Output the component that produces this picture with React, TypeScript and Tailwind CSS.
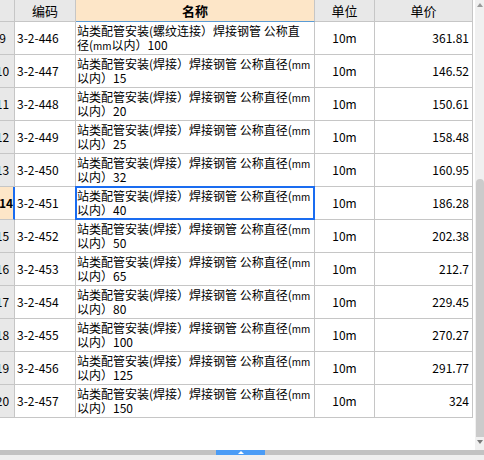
const rows = [
  { n: "9", code: "3-2-446", l1: "站类配管安装(螺纹连接）焊接钢管 公称直", mm: false, l2a: "径(", l2b: "以内）100", price: "361.81" },
  { n: "10", code: "3-2-447", l1: "站类配管安装(焊接）焊接钢管 公称直径(", mm: true, l2a: "", l2b: "以内）15", price: "146.52" },
  { n: "11", code: "3-2-448", l1: "站类配管安装(焊接）焊接钢管 公称直径(", mm: true, l2a: "", l2b: "以内）20", price: "150.61" },
  { n: "12", code: "3-2-449", l1: "站类配管安装(焊接）焊接钢管 公称直径(", mm: true, l2a: "", l2b: "以内）25", price: "158.48" },
  { n: "13", code: "3-2-450", l1: "站类配管安装(焊接）焊接钢管 公称直径(", mm: true, l2a: "", l2b: "以内）32", price: "160.95" },
  { n: "14", code: "3-2-451", l1: "站类配管安装(焊接）焊接钢管 公称直径(", mm: true, l2a: "", l2b: "以内）40", price: "186.28" },
  { n: "15", code: "3-2-452", l1: "站类配管安装(焊接）焊接钢管 公称直径(", mm: true, l2a: "", l2b: "以内）50", price: "202.38" },
  { n: "16", code: "3-2-453", l1: "站类配管安装(焊接）焊接钢管 公称直径(", mm: true, l2a: "", l2b: "以内）65", price: "212.7" },
  { n: "17", code: "3-2-454", l1: "站类配管安装(焊接）焊接钢管 公称直径(", mm: true, l2a: "", l2b: "以内）80", price: "229.45" },
  { n: "18", code: "3-2-455", l1: "站类配管安装(焊接）焊接钢管 公称直径(", mm: true, l2a: "", l2b: "以内）100", price: "270.27" },
  { n: "19", code: "3-2-456", l1: "站类配管安装(焊接）焊接钢管 公称直径(", mm: true, l2a: "", l2b: "以内）125", price: "291.77" },
  { n: "20", code: "3-2-457", l1: "站类配管安装(焊接）焊接钢管 公称直径(", mm: true, l2a: "", l2b: "以内）150", price: "324" },
];

export default function App() {
  return (
    <div className="flex h-[460px] w-[484px] flex-col overflow-hidden bg-white font-['Noto_Sans_CJK_SC',sans-serif] text-[12px] text-black">
      <div className="flex h-[450px]">
        {/* grid */}
        <div className="w-[473px] overflow-hidden bg-white">
          <div className="flex h-[22px] leading-[14px]">
            <div className="w-[15px] border-r border-b border-[#c6c6c6] bg-[#e8e8e8]" />
            <div className="flex w-[61px] items-center justify-center border-r border-b border-[#c6c6c6] bg-[#e8e8e8] text-[13px]">编码</div>
            <div className="flex w-[239px] items-center justify-center border-r border-b border-r-[#c6c6c6] border-b-[#5b9bd5] bg-[#fde6c8] text-[13px] font-bold">名称</div>
            <div className="flex w-[60px] items-center justify-center border-r border-b border-[#c6c6c6] bg-[#e8e8e8] text-[13px]">单位</div>
            <div className="flex w-[98px] items-center justify-center border-r border-b border-[#c6c6c6] bg-[#e8e8e8] text-[13px]">单价</div>
          </div>
          {rows.map((r) => {
            const sel = r.n === "14";
            return (
              <div key={r.n} className="flex h-[33px] leading-[14px]">
                <div
                  className={
                    sel
                      ? "flex w-[15px] items-center overflow-hidden border-r-2 border-b border-r-[#1a6cf0] border-b-[#c6c6c6] bg-[#fde6c8] font-bold"
                      : "flex w-[15px] items-center overflow-hidden border-r border-b border-[#c6c6c6] bg-[#e8e8e8]"
                  }
                >
                  <div className={sel ? "ml-[-2px] w-[16px] shrink-0 text-center whitespace-nowrap" : "ml-[-9px] w-[23px] shrink-0 text-center whitespace-nowrap"}>
                    {r.n}
                  </div>
                </div>
                <div className="flex w-[61px] items-center border-r border-b border-[#c6c6c6] pl-[2px] whitespace-nowrap">
                  {r.code}
                </div>
                <div className="relative flex w-[239px] flex-col justify-center border-r border-b border-[#c6c6c6] pl-[1px] whitespace-nowrap">
                  <div className="h-[14px]">
                    {r.l1}
                    {r.mm && <span className="text-[10px]">mm</span>}
                  </div>
                  <div className="h-[14px]">
                    {r.l2a}
                    {!r.mm && <span className="text-[10px]">mm</span>}
                    {r.l2b}
                  </div>
                  {sel && <div className="absolute top-[-1px] right-[-1px] bottom-[-1px] left-[-1px] border-2 border-[#1a6cf0]" />}
                </div>
                <div className="flex w-[60px] items-center justify-center border-r border-b border-[#c6c6c6]">10m</div>
                <div className="flex w-[98px] items-center justify-end border-r border-b border-[#c6c6c6] pr-[3px]">{r.price}</div>
              </div>
            );
          })}
        </div>
        <div className="w-[2px] bg-white" />
        {/* vertical scrollbar */}
        <div className="flex w-[9px] flex-col bg-[#f0f0f0]">
          <div className="flex h-[10px] items-start justify-center pt-[3px] pl-[1px]">
            <svg width="6" height="4" viewBox="0 0 6 4">
              <path d="M3 0 L6 4 L0 4 Z" fill="#9a9a9a" />
            </svg>
          </div>
          <div className="h-[169px]" />
          <div className="ml-[1px] h-[258px] rounded-t-[4px] bg-[#cbcbcb]" />
          <div className="flex h-[13px] items-start justify-center pt-[3px] pl-[1px]">
            <svg width="6" height="4" viewBox="0 0 6 4">
              <path d="M0 0 L6 0 L3 4 Z" fill="#7a7a7a" />
            </svg>
          </div>
        </div>
      </div>
      {/* horizontal splitter bar */}
      <div className="flex h-[5px] bg-[#c2c2c2]">
        <div className="w-[216px]" />
        <div className="flex w-[49px] items-center justify-center bg-[#4a9cf6]">
          <svg width="6" height="3" viewBox="0 0 6 3">
            <path d="M3 0 L6 3 L0 3 Z" fill="#ffffff" />
          </svg>
        </div>
      </div>
      <div className="h-[5px] bg-[#efefef]" />
    </div>
  );
}
